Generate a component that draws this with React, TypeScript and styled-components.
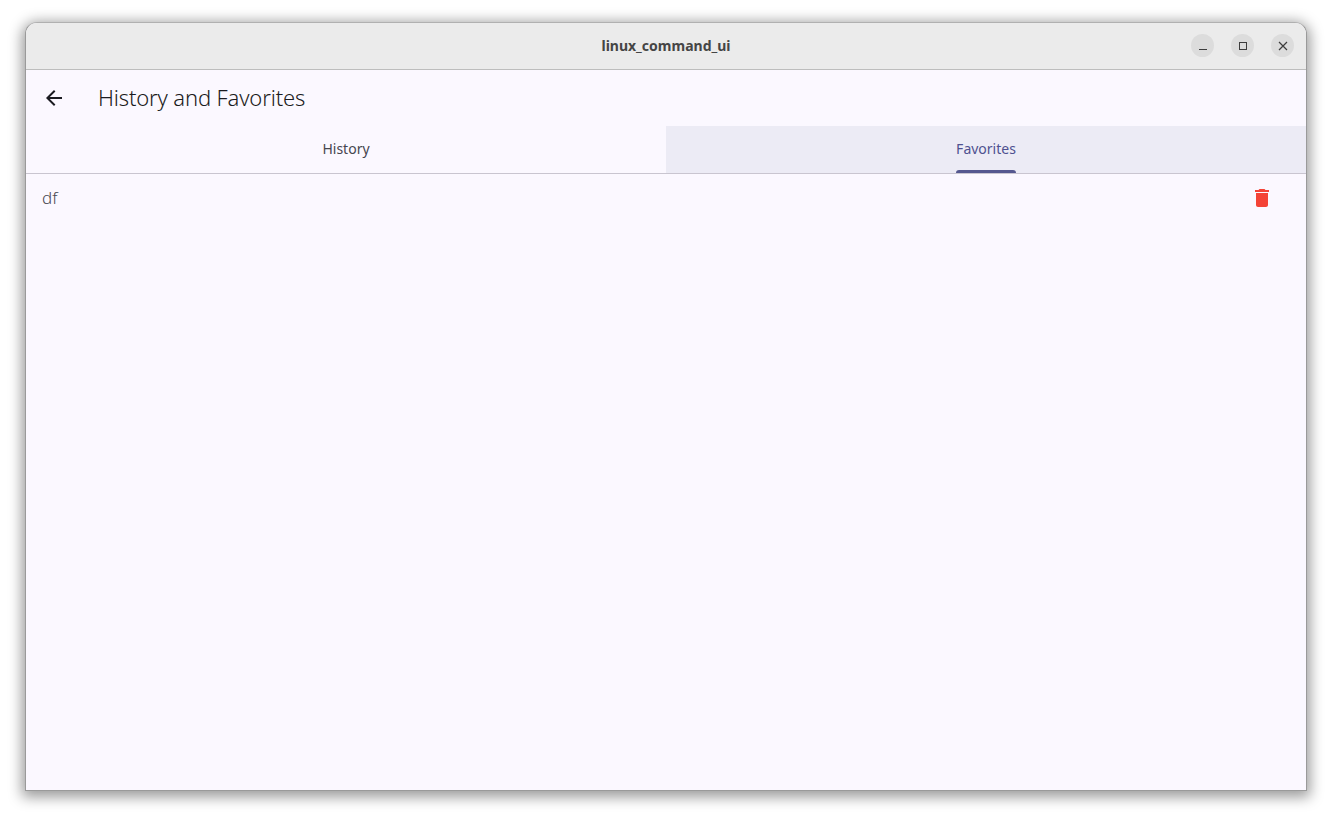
import { createGlobalStyle, styled } from 'styled-components'

const GlobalStyle = createGlobalStyle`
  html, body {
    margin: 0;
    height: 100%;
    background: #ffffff;
    overflow: hidden;
  }
`

const Desktop = styled.div`
  box-sizing: border-box;
  width: 1332px;
  height: 819px;
  padding: 22px 25px 28px 25px;
  font-family: 'Noto Sans', 'Open Sans', sans-serif;
`

const Window = styled.div`
  box-sizing: border-box;
  display: flex;
  flex-direction: column;
  width: 1282px;
  height: 769px;
  border: 1px solid #9a9a9a;
  border-top-color: #b0b0b0;
  border-radius: 12px 12px 0 0;
  background: #fbf8ff;
  box-shadow: 0 3px 14px 3px rgba(0, 0, 0, 0.4);
  overflow: hidden;
`

const TitleBar = styled.header`
  position: relative;
  display: flex;
  flex: none;
  align-items: center;
  justify-content: center;
  height: 47px;
  box-sizing: border-box;
  background: #ebebeb;
  border-bottom: 1px solid #bdbdbd;
`

const WindowTitle = styled.div`
  margin-bottom: 1px;
  font-size: 14px;
  font-weight: 700;
  color: #454545;
`

const WindowControls = styled.div`
  position: absolute;
  top: 11px;
  right: 12px;
  display: flex;
  gap: 17px;
`

const ControlButton = styled.div`
  display: flex;
  align-items: center;
  justify-content: center;
  width: 23px;
  height: 23px;
  border-radius: 50%;
  background: #dcdcdc;
  color: #3d3d3d;
`

const AppBar = styled.div`
  display: flex;
  flex: none;
  align-items: center;
  height: 56px;
  padding-left: 16px;
`

const BackButton = styled.div`
  display: flex;
  width: 24px;
  height: 24px;
  margin-right: 32px;
  color: #1b1b21;
`

const PageTitle = styled.h1`
  margin: 0 0 2px;
  font-size: 22px;
  font-weight: 300;
  letter-spacing: -0.15px;
  line-height: 28px;
  color: #1b1b21;
`

const TabBar = styled.div`
  display: flex;
  flex: none;
  height: 48px;
  box-sizing: border-box;
  border-bottom: 1px solid #c9c5d0;
`

const Tab = styled.div<{ $active?: boolean }>`
  display: flex;
  flex: 1;
  align-items: center;
  justify-content: center;
  background: ${({ $active }) => ($active ? '#ecebf5' : 'transparent')};
`

const TabLabel = styled.span<{ $active?: boolean }>`
  position: relative;
  display: flex;
  align-items: center;
  height: 47px;
  padding-bottom: 3px;
  box-sizing: border-box;
  font-size: 14px;
  color: ${({ $active }) => ($active ? '#4f5190' : '#46464f')};

  ${({ $active }) =>
    $active &&
    `
    &::after {
      content: '';
      position: absolute;
      left: 0;
      right: 0;
      bottom: 0;
      height: 3px;
      border-radius: 3px 3px 0 0;
      background: #55588f;
    }
  `}
`

const FavoriteList = styled.div`
  flex: 1;
`

const FavoriteRow = styled.div`
  display: flex;
  align-items: center;
  justify-content: space-between;
  height: 48px;
  padding: 0 32px 0 16px;
`

const FavoriteName = styled.span`
  margin-bottom: 2px;
  font-size: 17px;
  font-weight: 300;
  color: #4a4a52;
`

const DeleteIcon = styled.svg`
  width: 24px;
  height: 24px;
  fill: #f44336;
`

export default function App() {
  return (
    <>
      <GlobalStyle />
      <Desktop>
        <Window>
          <TitleBar>
            <WindowTitle>linux_command_ui</WindowTitle>
            <WindowControls>
              <ControlButton>
                <svg width="16" height="16" viewBox="0 0 16 16">
                  <rect x="4" y="11" width="8" height="1" fill="currentColor" />
                </svg>
              </ControlButton>
              <ControlButton>
                <svg width="16" height="16" viewBox="0 0 16 16" fill="none" stroke="currentColor">
                  <rect x="4.5" y="4.5" width="7" height="7" />
                </svg>
              </ControlButton>
              <ControlButton>
                <svg width="16" height="16" viewBox="0 0 16 16" fill="none" stroke="currentColor" strokeWidth="1.2">
                  <path d="M4 4l8 8M12 4l-8 8" />
                </svg>
              </ControlButton>
            </WindowControls>
          </TitleBar>

          <AppBar>
            <BackButton>
              <svg width="24" height="24" viewBox="0 0 24 24" fill="currentColor">
                <path d="M20 11H7.83l5.59-5.59L12 4l-8 8 8 8 1.41-1.41L7.83 13H20v-2z" />
              </svg>
            </BackButton>
            <PageTitle>History and Favorites</PageTitle>
          </AppBar>

          <TabBar>
            <Tab>
              <TabLabel>History</TabLabel>
            </Tab>
            <Tab $active>
              <TabLabel $active>Favorites</TabLabel>
            </Tab>
          </TabBar>

          <FavoriteList>
            <FavoriteRow>
              <FavoriteName>df</FavoriteName>
              <DeleteIcon viewBox="0 0 24 24">
                <path d="M6 19c0 1.1.9 2 2 2h8c1.1 0 2-.9 2-2V7H6v12zM19 4h-3.5l-1-1h-5l-1 1H5v2h14V4z" />
              </DeleteIcon>
            </FavoriteRow>
          </FavoriteList>
        </Window>
      </Desktop>
    </>
  )
}
